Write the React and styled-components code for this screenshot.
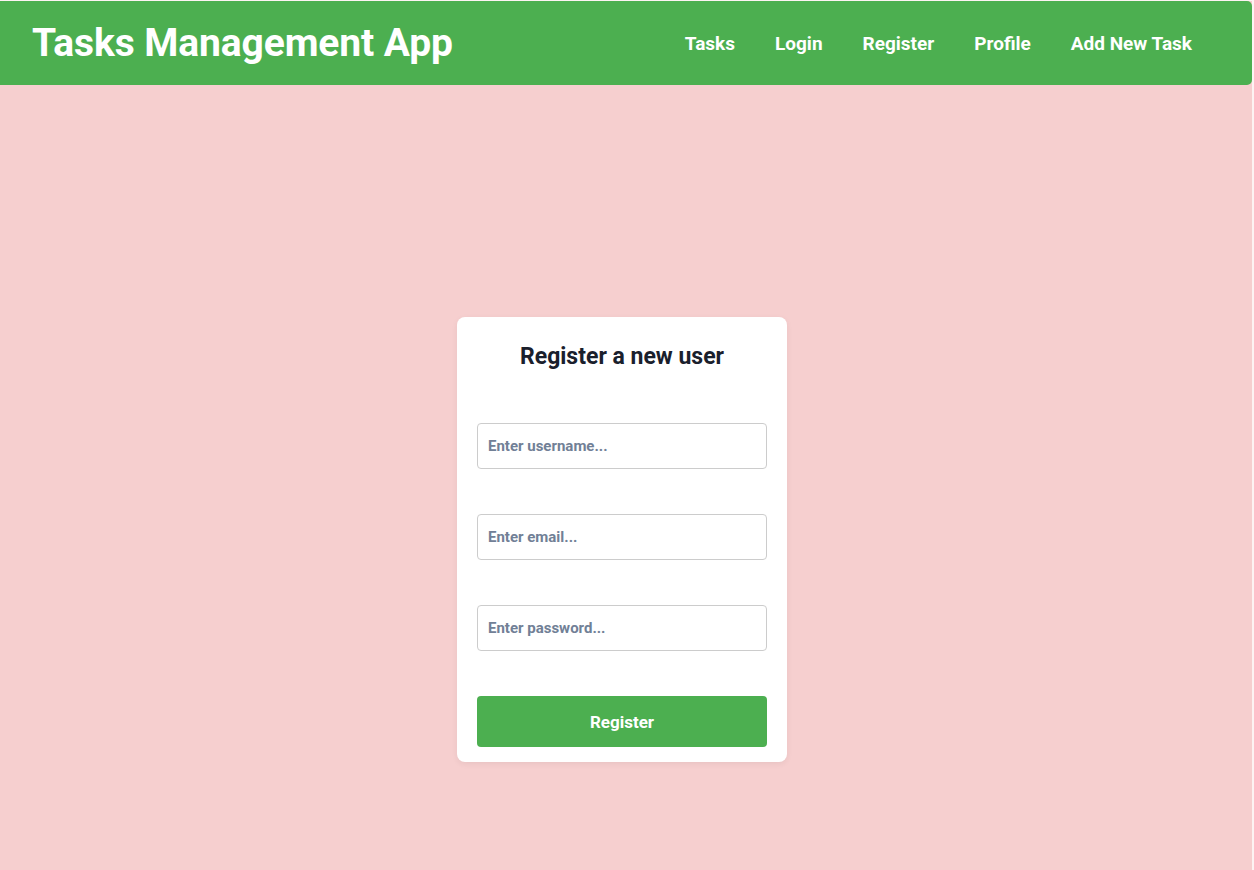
import React from 'react';
import styled, { createGlobalStyle } from 'styled-components';

const GlobalStyle = createGlobalStyle`
  html, body {
    margin: 0;
    padding: 0;
    background: #fdf3f3;
  }
  body {
    font-family: "Roboto", "Liberation Sans", sans-serif;
  }
`;

const links = ['Tasks', 'Login', 'Register', 'Profile', 'Add New Task'];

function App() {
  return (
    <>
      <GlobalStyle />
      <Page>
        <Header>
          <Brand>Tasks Management App</Brand>
          <Nav>
            {links.map((link) => (
              <NavLink key={link} href="#">
                {link}
              </NavLink>
            ))}
          </Nav>
        </Header>
        <Main>
          <Card>
            <Title>Register a new user</Title>
            <Form onSubmit={(e) => e.preventDefault()}>
              <Input type="text" placeholder="Enter username..." />
              <Input type="email" placeholder="Enter email..." />
              <Input type="password" placeholder="Enter password..." />
              <Button type="submit">Register</Button>
            </Form>
          </Card>
        </Main>
      </Page>
    </>
  );
}

const Page = styled.div`
  display: flex;
  flex-direction: column;
  min-height: 869px;
  margin-top: 1px;
  margin-right: 2px;
  background: #f6cfcf;
`;

const Header = styled.header`
  display: flex;
  align-items: center;
  justify-content: space-between;
  height: 84px;
  padding: 0 60px 0 32px;
  background: #4caf50;
  border-radius: 0 5px 5px 0;
`;

const Brand = styled.h1`
  margin: 0;
  font-size: 39px;
  font-weight: 700;
  color: #fff;
  letter-spacing: -0.1px;
`;

const Nav = styled.nav`
  display: flex;
  gap: 40px;
`;

const NavLink = styled.a`
  font-size: 19px;
  font-weight: 700;
  color: #fff;
  text-decoration: none;
`;

const Main = styled.main`
  flex: 1;
  display: flex;
  justify-content: center;
  padding: 232px 8px 0 0;
`;

const Card = styled.div`
  box-sizing: border-box;
  width: 330px;
  height: 445px;
  padding: 26px 20px 15px;
  background: #fff;
  border-radius: 8px;
  box-shadow: 0 2px 6px rgba(0, 0, 0, 0.06);
`;

const Title = styled.h2`
  margin: 0 0 53px;
  text-align: center;
  font-size: 23px;
  font-weight: 700;
  color: #1a202c;
`;

const Form = styled.form`
  display: flex;
  flex-direction: column;
  gap: 45px;
`;

const Input = styled.input`
  height: 46px;
  box-sizing: border-box;
  padding: 0 10px;
  border: 1px solid #cccccc;
  border-radius: 4px;
  font-family: inherit;
  font-size: 15px;
  font-weight: 700;
  color: #2d3748;
  outline: none;
  &::placeholder {
    color: #718096;
  }
`;

const Button = styled.button`
  height: 51px;
  border: none;
  border-radius: 4px;
  background: #4caf50;
  color: #fff;
  font-family: inherit;
  font-size: 17px;
  font-weight: 700;
  cursor: pointer;
`;

export default App;
